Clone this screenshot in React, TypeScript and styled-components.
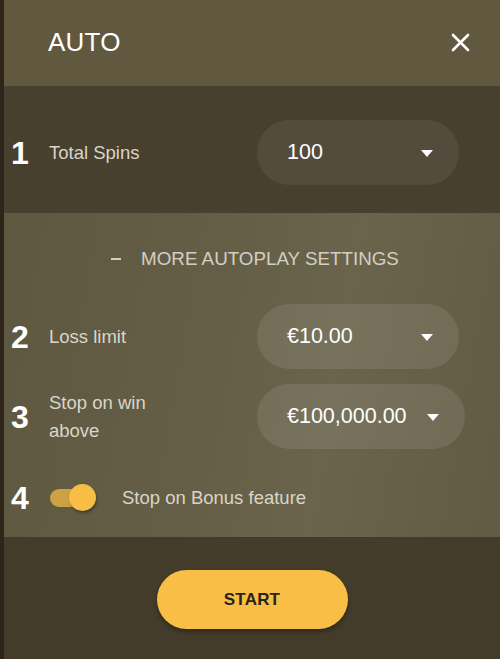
import React from "react";
import styled, { createGlobalStyle } from "styled-components";

const GlobalStyle = createGlobalStyle`
  html, body {
    margin: 0;
    padding: 0;
    background: #2f2419;
    font-family: "Liberation Sans", Arial, Helvetica, sans-serif;
  }
`;

const Panel = styled.div`
  margin-left: 4px;
  width: 496px;
  height: 659px;
  display: flex;
  flex-direction: column;
  color: #ffffff;
`;

const Header = styled.header`
  height: 86px;
  box-sizing: border-box;
  padding: 0 30px 0 44px;
  display: flex;
  align-items: center;
  justify-content: space-between;
  background: #605940;
`;

const Title = styled.h1`
  margin: 0;
  font-size: 26px;
  font-weight: 400;
  line-height: 1;
  letter-spacing: 0.2px;
  margin-top: -2px;
`;

const CloseButton = styled.button`
  border: none;
  background: transparent;
  padding: 0;
  width: 20px;
  height: 20px;
  display: flex;
  align-items: center;
  justify-content: center;
  margin-top: -1px;
`;

const Section = styled.section<{ $tone: "dark" | "light" }>`
  display: flex;
  flex-direction: column;
  background: ${(p) =>
    p.$tone === "dark"
      ? "#47402f"
      : "linear-gradient(100deg, #5f5841 0%, #665f47 45%, #6b644c 65%, #625b43 100%)"};
`;

const SpinsSection = styled(Section)`
  padding: 34px 0 28px;
`;

const MoreSection = styled(Section)`
  padding: 35px 0 27px;
  flex: 1;
`;

const Row = styled.div<{ $gap?: number }>`
  display: grid;
  grid-template-columns: 41px 208px auto;
  align-items: center;
  padding-left: 4px;
  margin-top: ${(p) => p.$gap ?? 0}px;
`;

const ToggleRow = styled(Row)`
  grid-template-columns: 41px 73px auto;
  height: 28px;
`;

const Num = styled.span`
  font-size: 32px;
  line-height: 1;
  font-weight: 700;
  color: #ffffff;
  padding-left: 3px;
`;

const Label = styled.span<{ $wide?: boolean }>`
  font-size: 18.5px;
  line-height: 28px;
  color: #d9d5c9;
  max-width: ${(p) => (p.$wide ? "none" : "120px")};
`;

const Pill = styled.button<{ $light?: boolean }>`
  justify-self: start;
  min-width: 202px;
  height: 65px;
  box-sizing: border-box;
  padding: 0 26px 0 30px;
  border: none;
  border-radius: 33px;
  display: flex;
  align-items: center;
  justify-content: space-between;
  gap: 20px;
  font-family: inherit;
  font-size: 21.5px;
  color: #ffffff;
  background: ${(p) =>
    p.$light ? "rgba(255, 255, 255, 0.09)" : "rgba(255, 255, 255, 0.065)"};
`;

const Caret = styled.span`
  width: 0;
  height: 0;
  border-left: 6px solid transparent;
  border-right: 6px solid transparent;
  border-top: 7px solid #ffffff;
  margin-top: 2px;
`;

const MoreToggle = styled.button`
  align-self: center;
  border: none;
  background: transparent;
  padding: 0;
  margin-left: 6px;
  display: flex;
  align-items: center;
  gap: 20px;
  font-family: inherit;
  font-size: 18.8px;
  line-height: 22px;
  color: #d3cfc3;
`;

const Minus = styled.span`
  width: 10px;
  height: 2px;
  background: #d3cfc3;
`;

const Switch = styled.span`
  position: relative;
  width: 38px;
  height: 18px;
  margin-left: 1px;
  border-radius: 9px;
  background: rgba(247, 189, 69, 0.72);
`;

const Knob = styled.span`
  position: absolute;
  right: -8px;
  top: -5px;
  width: 27px;
  height: 27px;
  border-radius: 50%;
  background: #f8bd45;
  box-shadow: 1px 2px 3px rgba(0, 0, 0, 0.35);
`;

const Footer = styled.footer`
  height: 122px;
  box-sizing: border-box;
  padding-top: 33px;
  display: flex;
  justify-content: center;
  background: #433c2b;
`;

const StartButton = styled.button`
  width: 191px;
  height: 59px;
  border: none;
  border-radius: 30px;
  background: #f8be46;
  box-shadow: 0 3px 4px rgba(0, 0, 0, 0.3);
  font-family: inherit;
  font-size: 17px;
  font-weight: 700;
  color: #2a2418;
  letter-spacing: 0.2px;
`;

const Select = ({ value, light }: { value: string; light?: boolean }) => (
  <Pill $light={light}>
    <span>{value}</span>
    <Caret />
  </Pill>
);

export default function App() {
  return (
    <>
      <GlobalStyle />
      <Panel>
        <Header>
          <Title>AUTO</Title>
          <CloseButton aria-label="Close">
            <svg width="19" height="19" viewBox="0 0 19 19">
              <path
                d="M2 2 L17 17 M17 2 L2 17"
                stroke="#ffffff"
                strokeWidth="2.6"
                strokeLinecap="round"
              />
            </svg>
          </CloseButton>
        </Header>

        <SpinsSection $tone="dark">
          <Row>
            <Num>1</Num>
            <Label>Total Spins</Label>
            <Select value="100" />
          </Row>
        </SpinsSection>

        <MoreSection $tone="light">
          <MoreToggle>
            <Minus />
            MORE AUTOPLAY SETTINGS
          </MoreToggle>
          <Row $gap={34}>
            <Num>2</Num>
            <Label>Loss limit</Label>
            <Select value="€10.00" light />
          </Row>
          <Row $gap={15}>
            <Num>3</Num>
            <Label>Stop on win above</Label>
            <Select value="€100,000.00" light />
          </Row>
          <ToggleRow $gap={33}>
            <Num>4</Num>
            <Switch>
              <Knob />
            </Switch>
            <Label $wide>Stop on Bonus feature</Label>
          </ToggleRow>
        </MoreSection>

        <Footer>
          <StartButton>START</StartButton>
        </Footer>
      </Panel>
    </>
  );
}
